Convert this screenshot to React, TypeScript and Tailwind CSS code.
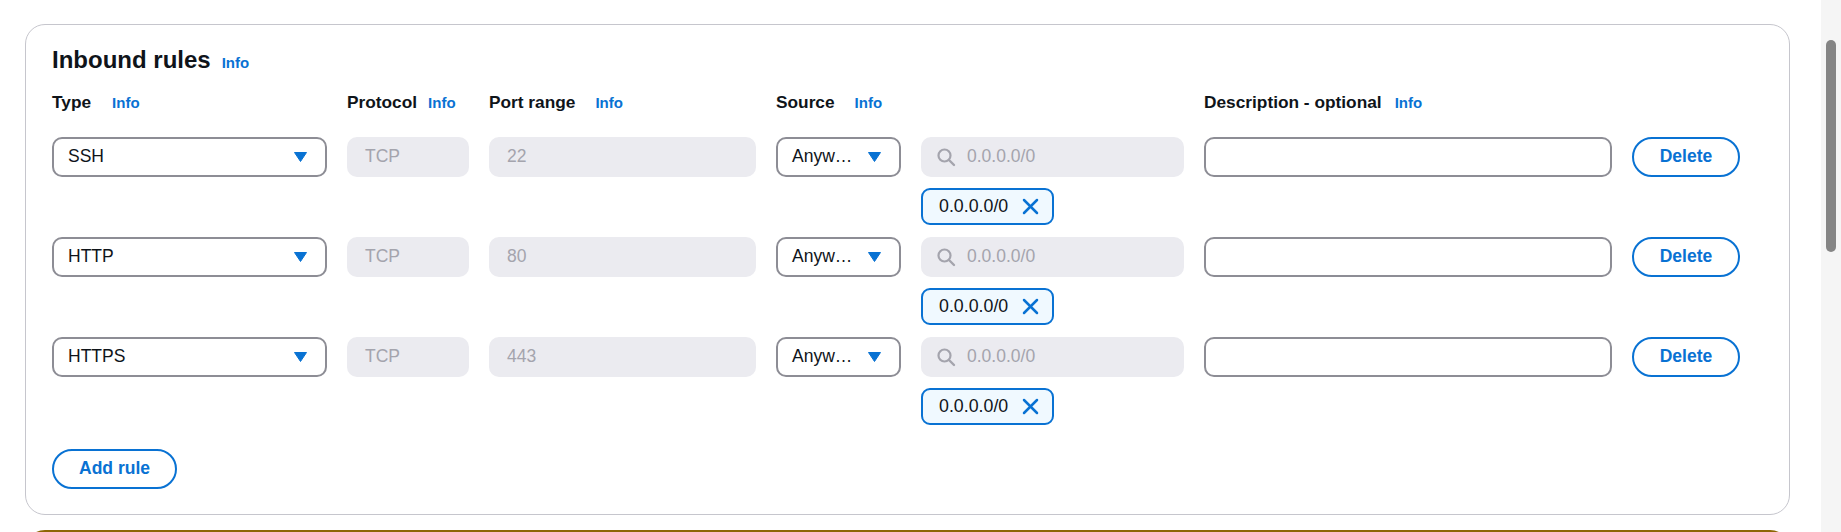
import React from "react";

const rules = [
  { type: "SSH", port: "22" },
  { type: "HTTP", port: "80" },
  { type: "HTTPS", port: "443" },
];

const GRID =
  "grid grid-cols-[275px_122px_267px_125px_263px_408px_108px] gap-x-[20px]";

function Caret() {
  return (
    <svg width="13" height="10" viewBox="0 0 13 10" className="shrink-0">
      <polygon points="0.5,0.5 12.5,0.5 6.5,9.5" fill="#0972d3" strokeLinejoin="round" stroke="#0972d3" strokeWidth="1" />
    </svg>
  );
}

function SearchIcon() {
  return (
    <svg width="20" height="20" viewBox="0 0 20 20" className="shrink-0">
      <circle cx="8.5" cy="8.5" r="6" fill="none" stroke="#a4a4ad" strokeWidth="2.2" />
      <line x1="13" y1="13" x2="18" y2="18" stroke="#a4a4ad" strokeWidth="2.4" strokeLinecap="round" />
    </svg>
  );
}

function XIcon() {
  return (
    <svg width="17" height="17" viewBox="0 0 17 17" className="shrink-0">
      <line x1="2" y1="2" x2="15" y2="15" stroke="#0972d3" strokeWidth="2.5" strokeLinecap="round" />
      <line x1="15" y1="2" x2="2" y2="15" stroke="#0972d3" strokeWidth="2.5" strokeLinecap="round" />
    </svg>
  );
}

function Label({ text, gap }: { text: string; gap: string }) {
  return (
    <div className="flex items-baseline">
      <span className="text-[17.3px] leading-[22px] font-bold text-[#0f141a]">{text}</span>
      <span className={`${gap} text-[15px] font-bold text-[#0972d3]`}>Info</span>
    </div>
  );
}

function RuleRow({ type, port }: { type: string; port: string }) {
  return (
    <div className={`${GRID} gap-y-[11px]`}>
      <div className="h-[40px] flex items-center justify-between pl-[14px] pr-[18px] border-2 border-[#8d8d95] rounded-[10px] bg-white">
        <span className="text-[17.5px] text-[#0f141a]">{type}</span>
        <Caret />
      </div>
      <div className="h-[40px] flex items-center pl-[18px] rounded-[10px] bg-[#ebebf0]">
        <span className="text-[17.5px] text-[#a4a4ad]">TCP</span>
      </div>
      <div className="h-[40px] flex items-center pl-[18px] rounded-[10px] bg-[#ebebf0]">
        <span className="text-[17.5px] text-[#a4a4ad]">{port}</span>
      </div>
      <div className="h-[40px] flex items-center justify-between pl-[14px] pr-[18px] border-2 border-[#8d8d95] rounded-[10px] bg-white">
        <span className="text-[17.5px] text-[#0f141a]">Anyw…</span>
        <Caret />
      </div>
      <div className="h-[40px] flex items-center gap-[11px] pl-[15px] rounded-[10px] bg-[#ebebf0]">
        <SearchIcon />
        <span className="text-[17.5px] text-[#a4a4ad]">0.0.0.0/0</span>
      </div>
      <div className="h-[40px] border-2 border-[#8d8d95] rounded-[10px] bg-white" />
      <button className="h-[40px] flex items-center justify-center border-2 border-[#0972d3] rounded-full bg-white text-[17.5px] font-bold text-[#0972d3]">
        Delete
      </button>
      <div className="col-start-5 justify-self-start h-[37px] flex items-center gap-[14px] pl-[16px] pr-[13px] border-2 border-[#0972d3] rounded-[9px] bg-[#f0f9ff]">
        <span className="text-[17.8px] text-[#0f141a]">0.0.0.0/0</span>
        <XIcon />
      </div>
    </div>
  );
}

export default function App() {
  return (
    <div className="flex h-[532px] w-full overflow-hidden bg-white font-['Liberation_Sans',Arial,sans-serif]">
      <div className="flex-1 min-w-0 pl-[25px] pr-[31px] pt-[24px]">
        <div className="border border-[#c6c6cd] rounded-[20px] bg-white pl-[26px] pr-[26px] pt-[20px] pb-[25px]">
          <div className="flex items-baseline h-[30px]">
            <h2 className="text-[24px] leading-[30px] font-bold text-[#0f141a]">Inbound rules</h2>
            <span className="ml-[11px] text-[15px] font-bold text-[#0972d3]">Info</span>
          </div>
          <div className={`${GRID} mt-[16px]`}>
            <Label text="Type" gap="ml-[21px]" />
            <Label text="Protocol" gap="ml-[11px]" />
            <Label text="Port range" gap="ml-[20px]" />
            <div className="col-span-2">
              <Label text="Source" gap="ml-[20px]" />
            </div>
            <Label text="Description - optional" gap="ml-[13px]" />
            <div />
          </div>
          <div className="mt-[22px] flex flex-col gap-[12px]">
            {rules.map((r) => (
              <RuleRow key={r.type} type={r.type} port={r.port} />
            ))}
          </div>
          <button className="mt-[24px] h-[40px] px-[25px] border-2 border-[#0972d3] rounded-full bg-white text-[17.5px] font-bold text-[#0972d3]">
            Add rule
          </button>
        </div>
        <div className="mt-[15px] h-[60px] border-2 border-[#8d6605] rounded-[20px] bg-[#fffef0]" />
      </div>
      <div className="w-[20px] h-[532px] bg-[#f5f5f5] flex flex-col items-center pt-[40px]">
        <div className="w-[10px] h-[212px] rounded-full bg-[#858585]" />
      </div>
    </div>
  );
}
